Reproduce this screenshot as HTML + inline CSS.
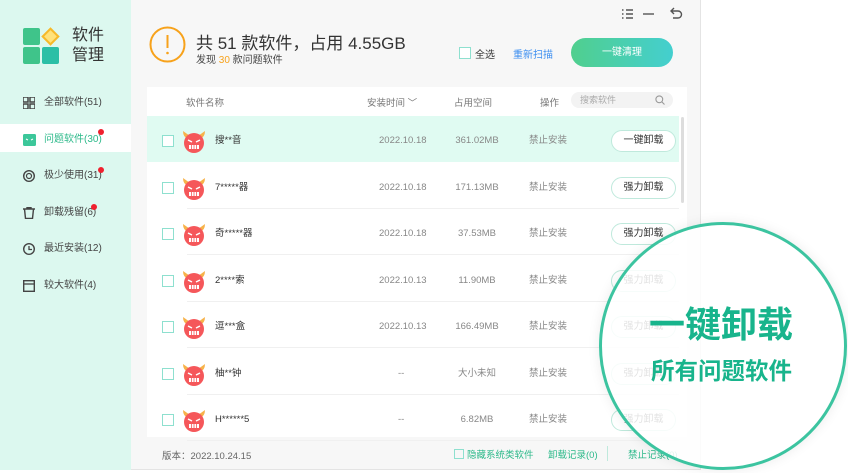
<!DOCTYPE html>
<html><head><meta charset="utf-8"><style>
*{margin:0;padding:0;box-sizing:border-box}
body{width:848px;height:473px;background:#fff;font-family:"Liberation Sans","Noto Sans CJK SC",sans-serif;position:relative;overflow:hidden;color:#333}
.abs{position:absolute}
.win{left:0;top:0;width:701px;height:470px;background:#f7f7f7;border-right:1px solid #e4e4e4;border-bottom:1px solid #e4e4e4}
.side{left:0;top:0;width:131px;height:470px;background:#dcf8ef}
.nav{position:absolute;left:0;width:131px;height:28px;font-size:10px;color:#444;line-height:28px;padding-left:44px}
.nav svg{position:absolute;left:23px;top:8px}
.dot{position:absolute;width:6px;height:6px;border-radius:50%;background:#f0202e}
.tbl{left:147px;top:87px;width:540px;height:350px;background:#fff}
.row{position:absolute;left:0;width:532px;height:46px;font-size:9.5px;color:#888;line-height:46px}
.row .cb{position:absolute;left:15px;top:17px;width:12px;height:12px;border:1.5px solid #8ee0cf;background:#fff}
.row .nm{position:absolute;left:68px;color:#333}
.row .dt{position:absolute;left:232px}
.row .sz{position:absolute;left:290px;width:80px;text-align:center}
.row .op{position:absolute;left:382px}
.row .bt{position:absolute;left:464px;top:12px;width:65px;height:22px;border:1px solid #bfe9dc;border-radius:11px;background:#fff;line-height:20px;text-align:center;color:#333;font-size:10px}
.row .ln{position:absolute;left:40px;right:0;bottom:0;height:1px;background:#f0f0f0}
.dv{position:absolute;left:34px;top:12px}
</style></head><body>
<div class="abs win"></div>
<div class="abs side">
  <div class="abs" style="left:23px;top:28px;width:17px;height:17px;background:#3fc48a;border-radius:2px"></div>
  <div class="abs" style="left:23px;top:47px;width:17px;height:17px;background:#3fc48a;border-radius:2px"></div>
  <div class="abs" style="left:42px;top:47px;width:17px;height:17px;background:#2bbfa6;border-radius:2px"></div>
  <div class="abs" style="left:44px;top:30px;width:13px;height:13px;background:#ffe27a;border:2px solid #f6b92a;transform:rotate(45deg)"></div>
  <div class="abs" style="left:72px;top:26px;font-size:16px;line-height:20px;color:#333">软件<br>管理</div>
</div>
<div class="nav" style="top:89px"><svg width="12" height="12"><rect x="0" y="0" width="5" height="5" fill="none" stroke="#444" stroke-width="1.5"/><rect x="7" y="0" width="5" height="5" fill="none" stroke="#444" stroke-width="1.5"/><rect x="0" y="7" width="5" height="5" fill="none" stroke="#444" stroke-width="1.5"/><rect x="7" y="7" width="5" height="5" fill="none" stroke="#444" stroke-width="1.5"/></svg>全部软件(51)</div>
<div class="nav" style="top:124px;height:28px;background:#fff;color:#2cb98a;padding-top:2px"><svg width="13" height="12" style="top:10px"><rect width="13" height="12" rx="1.5" fill="#3cc79a"/><path d="M3 5l2 1M10 5l-2 1" stroke="#fff" stroke-width="1"/></svg>问题软件(30)</div>
<div class="dot" style="left:98px;top:129px"></div>
<div class="nav" style="top:162px"><svg width="12" height="12"><circle cx="6" cy="6" r="5.3" fill="none" stroke="#444" stroke-width="1.4"/><circle cx="6" cy="6" r="2.5" fill="none" stroke="#444" stroke-width="1.2"/></svg>极少使用(31)</div>
<div class="dot" style="left:98px;top:167px"></div>
<div class="nav" style="top:199px"><svg width="12" height="12"><path d="M0 2h12M4 2V0.5h4V2M1.5 2l1 9.5h7l1-9.5" fill="none" stroke="#444" stroke-width="1.4"/></svg>卸载残留(6)</div>
<div class="dot" style="left:91px;top:204px"></div>
<div class="nav" style="top:235px"><svg width="12" height="12"><circle cx="6" cy="6" r="5.3" fill="none" stroke="#444" stroke-width="1.4"/><path d="M6 3v3.5h3" fill="none" stroke="#444" stroke-width="1.3"/></svg>最近安装(12)</div>
<div class="nav" style="top:272px"><svg width="12" height="12"><rect x="0.7" y="0.7" width="10.6" height="10.6" fill="none" stroke="#444" stroke-width="1.4"/><path d="M0.7 4h10.6" stroke="#444" stroke-width="1.3"/></svg>较大软件(4)</div>

<svg class="abs" style="left:620px;top:7px" width="70" height="14"><g stroke="#555" stroke-width="1.4" fill="none"><path d="M2 3h1.5M6 3h7M2 7h1.5M6 7h7M2 11h1.5M6 11h7"/><path d="M23 7h11"/><path d="M52 4h6a3.5 3.5 0 010 7h-5M54 1l-3 3 3 3"/></g></svg>

<svg class="abs" style="left:149px;top:26px" width="38" height="38"><circle cx="18.5" cy="18.5" r="17" fill="none" stroke="#f7a21b" stroke-width="2"/><path d="M18.5 9v13" stroke="#f7a21b" stroke-width="2"/><circle cx="18.5" cy="27" r="1.3" fill="#f7a21b"/></svg>
<div class="abs" style="left:196px;top:29px;font-size:17px;color:#333;white-space:nowrap">共 51 款软件，占用 4.55GB</div>
<div class="abs" style="left:196px;top:51px;font-size:10px;color:#444">发现 <span style="color:#f7a21b">30</span> 款问题软件</div>
<div class="abs" style="left:459px;top:47px;width:12px;height:12px;border:1.5px solid #8ee0cf;background:#fff"></div>
<div class="abs" style="left:475px;top:46px;font-size:10px;color:#333">全选</div>
<div class="abs" style="left:513px;top:46px;font-size:10px;color:#3b8ef0">重新扫描</div>
<div class="abs" style="left:571px;top:38px;width:102px;height:29px;border-radius:15px;background:linear-gradient(90deg,#50cf8e,#44cfcf);color:#fff;font-size:10px;text-align:center;line-height:29px">一键清理</div>

<div class="abs tbl">
  <div class="abs" style="left:39px;top:8px;font-size:9.5px;color:#777">软件名称</div>
  <div class="abs" style="left:220px;top:8px;font-size:9.5px;color:#777">安装时间 ﹀</div>
  <div class="abs" style="left:307px;top:8px;font-size:9.5px;color:#777">占用空间</div>
  <div class="abs" style="left:393px;top:8px;font-size:9.5px;color:#777">操作</div>
  <div class="abs" style="left:424px;top:5px;width:102px;height:16px;border-radius:8px;background:#f3f3f3;font-size:9px;color:#aaa;line-height:16px;padding-left:9px">搜索软件<svg style="position:absolute;right:8px;top:3px" width="10" height="10"><circle cx="4.3" cy="4.3" r="3.4" fill="none" stroke="#999" stroke-width="1.1"/><path d="M7 7l2.5 2.5" stroke="#999" stroke-width="1.1"/></svg></div>
  <div class="abs" style="left:534px;top:30px;width:3px;height:86px;background:#ddd;border-radius:2px"></div>
</div>
<div id="rows"></div>

<div class="abs" style="left:162px;top:448px;font-size:9.5px;color:#666">版本：2022.10.24.15</div>
<div class="abs" style="left:454px;top:449px;width:10px;height:10px;border:1.3px solid #8ee0cf"></div>
<div class="abs" style="left:467px;top:447px;font-size:9.5px;color:#2cb98a">隐藏系统类软件</div>
<div class="abs" style="left:548px;top:447px;font-size:9.5px;color:#2cb98a">卸载记录(0)</div>
<div class="abs" style="left:607px;top:446px;width:1px;height:15px;background:#bfe9dc"></div>
<div class="abs" style="left:628px;top:447px;font-size:9.5px;color:#2cb98a">禁止记录(0)</div>

<div class="abs" style="left:599px;top:222px;width:248px;height:248px;border-radius:50%;border:3px solid #3cc4a0;background:rgba(255,255,255,0.86);box-shadow:0 0 12px rgba(0,0,0,0.08)"></div>
<div class="abs" style="left:649px;top:303px;font-size:36px;font-weight:bold;color:#18b48c;white-space:nowrap;line-height:44px">一键卸载</div>
<div class="abs" style="left:651px;top:356px;font-size:23.5px;font-weight:bold;color:#18b48c;white-space:nowrap;line-height:30px">所有问题软件</div>

<script>
var d=[["搜**音","2022.10.18","361.02MB","一键卸载"],["7*****器","2022.10.18","171.13MB","强力卸载"],["奇*****器","2022.10.18","37.53MB","强力卸载"],["2****索","2022.10.13","11.90MB","强力卸载"],["逗***盒","2022.10.13","166.49MB","强力卸载"],["柚**钟","--","大小未知","强力卸载"],["H******5","--","6.82MB","强力卸载"]];
var dev='<svg class="dv" width="26" height="24"><path d="M2 1q0 6 5 8l2-3z M24 1q0 6-5 8l-2-3z" fill="#f7b24a"/><circle cx="13" cy="13" r="10" fill="#f5575a"/><path d="M7 10l4 2M19 10l-4 2" stroke="#fff" stroke-width="1.5"/><rect x="8" y="15" width="10" height="4" fill="#fff"/><path d="M10.5 15v4M13 15v4M15.5 15v4" stroke="#f5575a" stroke-width="0.8"/></svg>';
var h='';d.forEach(function(r,i){var t=116+i*46.5;h+='<div class="row" style="left:147px;top:'+t+'px;'+(i==0?'background:#e0fbf2;':'')+'"><div style="position:absolute;left:0;top:2px;width:100%;height:46px"><div class="cb"></div>'+dev+'<span class="nm">'+r[0]+'</span><span class="dt" style="'+(r[1]=='--'?'left:251px':'')+'">'+r[1]+'</span><span class="sz">'+r[2]+'</span><span class="op">禁止安装</span><div class="bt">'+r[3]+'</div></div>'+(i>0?'<div class="ln"></div>':'')+'</div>'});
document.getElementById('rows').innerHTML=h;
</script>
</body></html>
